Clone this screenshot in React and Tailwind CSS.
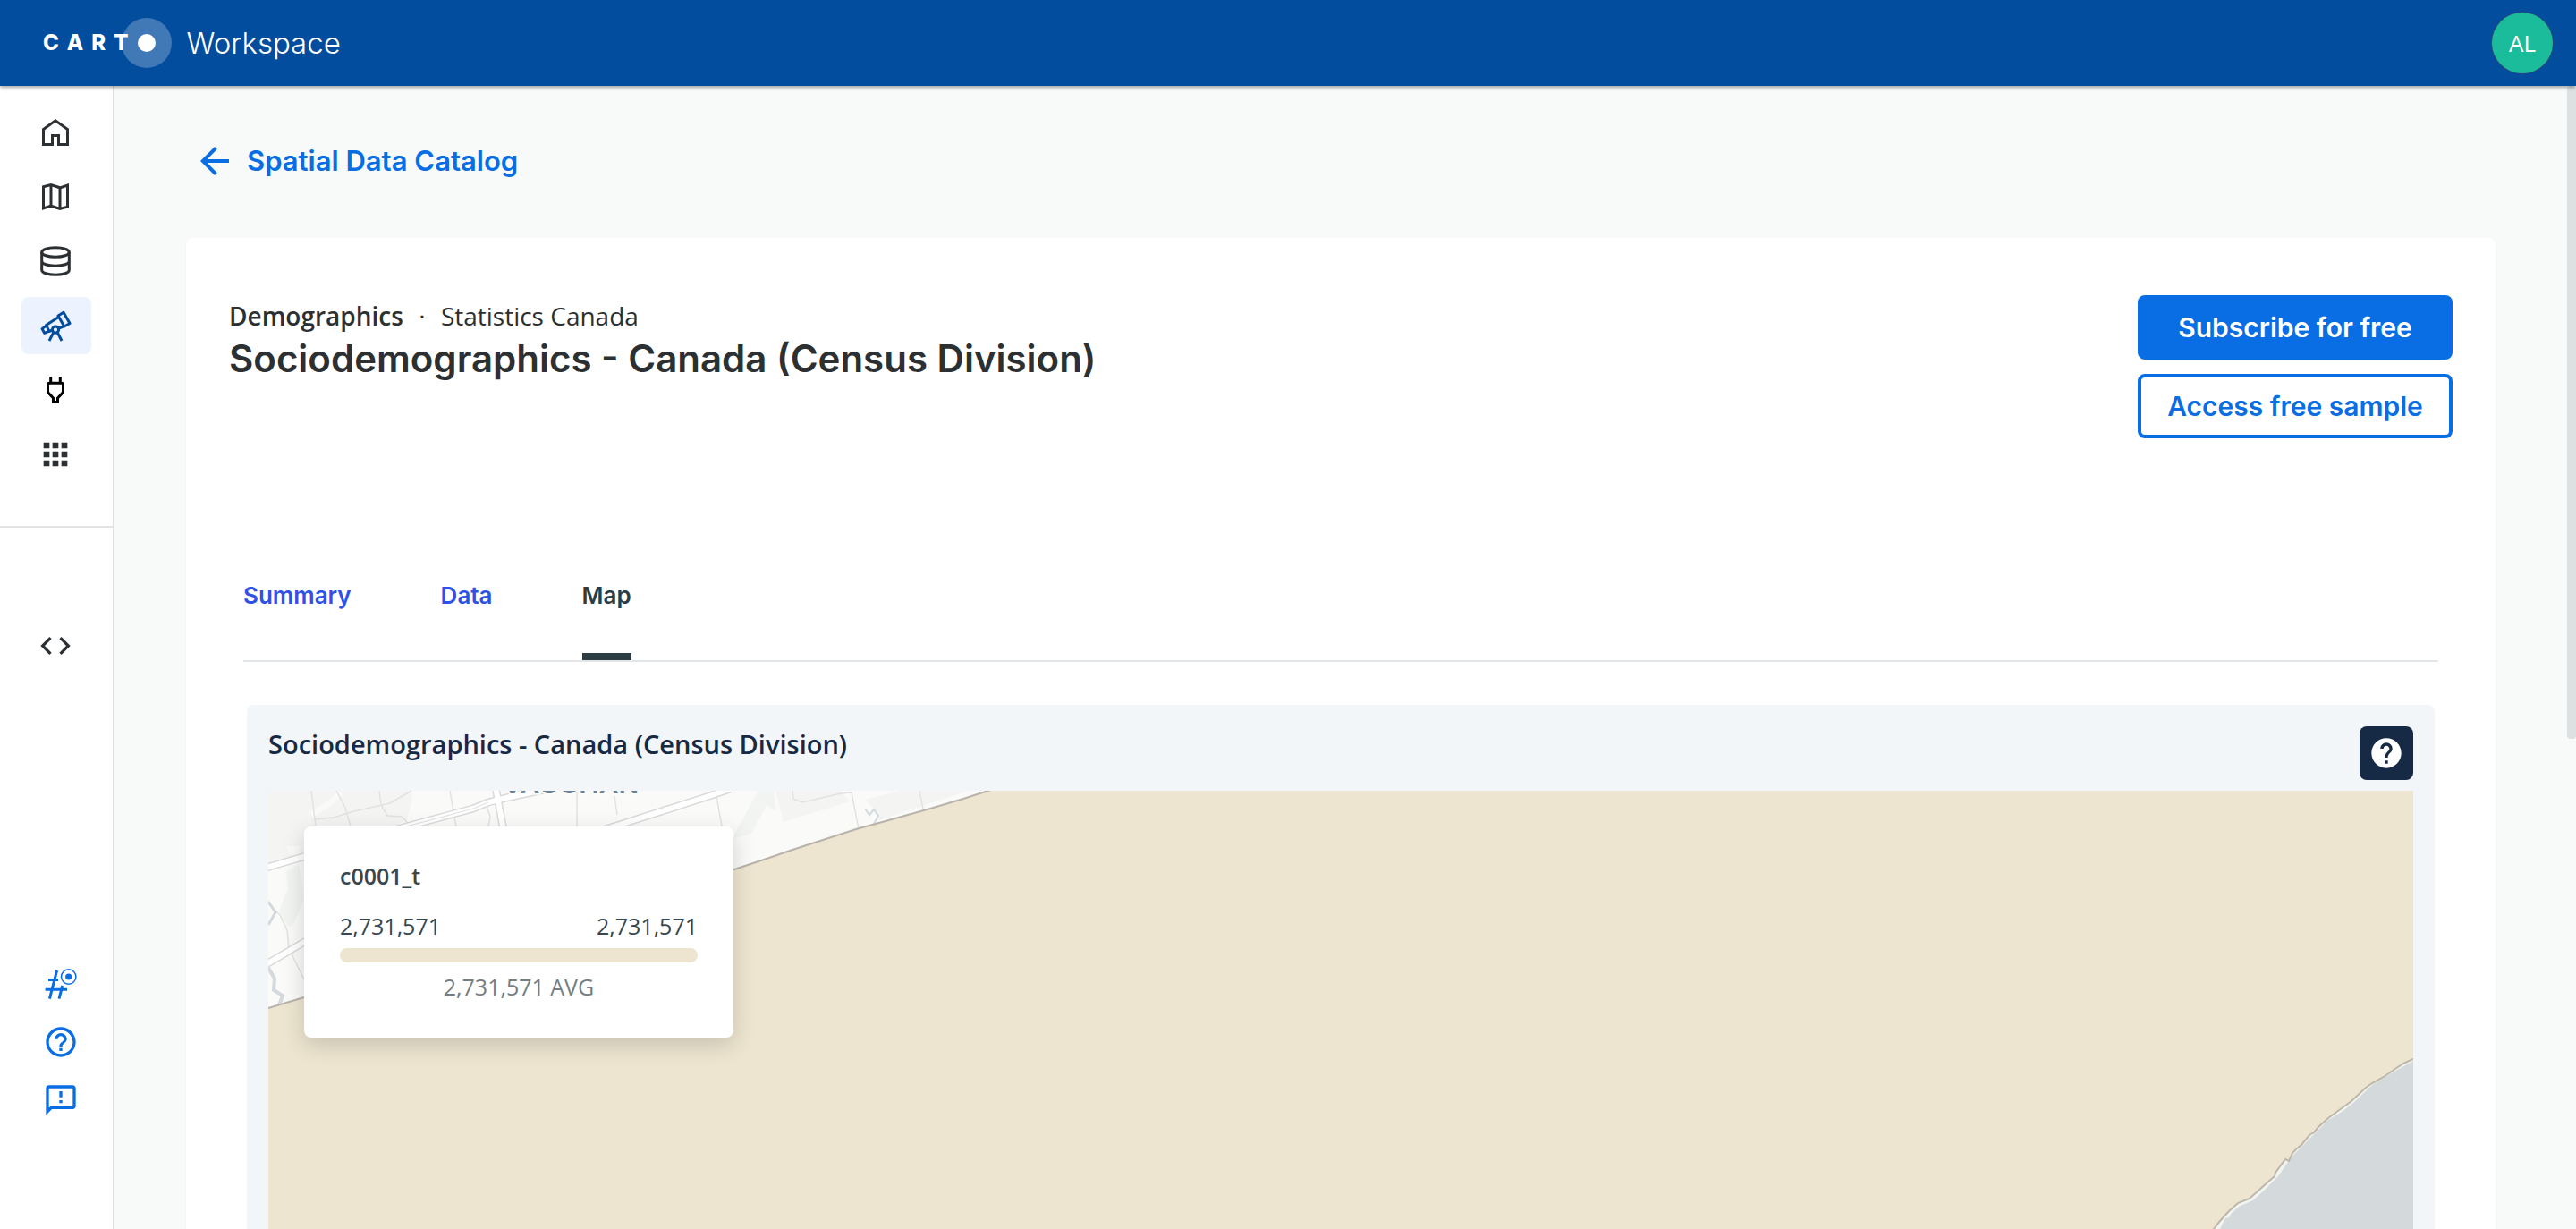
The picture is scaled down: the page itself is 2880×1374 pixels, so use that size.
import React from "react";
import { MdApps, MdArrowBack, MdCode, MdHelp, MdHelpOutline, MdOutlineFeedback } from "react-icons/md";

const outline = { fill: "none", stroke: "currentColor", strokeWidth: 3 };

function HomeIcon() {
  return (
    <svg viewBox="0 0 36 36" className="size-9" {...outline}>
      <path d="M4.5 31.5V14.6L18 4.8L31.5 14.6V31.5H21.5V21.5H14.5V31.5Z" />
    </svg>
  );
}

function MapIcon() {
  return (
    <svg viewBox="0 0 36 36" className="size-9" {...outline}>
      <path d="M4.5 6.8L13 4.6L23 7.8L31.5 5V29.2L23 31.4L13 28.2L4.5 31Z M13 4.6V28.2 M23 7.8V31.4" />
    </svg>
  );
}

function DatabaseIcon() {
  return (
    <svg viewBox="0 0 36 36" className="size-9" {...outline}>
      <ellipse cx="18" cy="8" rx="15.3" ry="5.3" />
      <path d="M2.7 8V28A15.3 5.3 0 0 0 33.3 28V8 M2.7 18A15.3 5.3 0 0 0 33.3 18" />
    </svg>
  );
}

function TelescopeIcon() {
  return (
    <svg viewBox="0 0 36 36" className="size-9" {...outline} strokeLinejoin="round">
      <path d="M21 7L27 3.2L34 15.5L27.8 19Z" />
      <path d="M21.5 8.5L7.5 17.6L11.2 24.4L14.5 23 M21.8 21L28 18.6" />
      <path d="M7.5 18.4L3 21.6L5.8 26.4L11 24.2" />
      <circle cx="18" cy="22.6" r="3.6" />
      <path d="M15.8 25.6L11 35 M20.2 25.6L25 35" />
    </svg>
  );
}

function PlugIcon() {
  return (
    <svg viewBox="0 0 36 36" className="size-9 text-black" {...outline}>
      <path d="M12.7 3V10 M23.3 3V10" />
      <path d="M9.5 12Q9.5 10.2 11.5 10.2H24.5Q26.5 10.2 26.5 12V20.6L20.5 27V31.5H15.5V27L9.5 20.6Z" />
    </svg>
  );
}

function HashIcon() {
  return (
    <svg viewBox="0 0 40 40" className="size-10" {...outline}>
      <path d="M15.6 5L7.4 36.6 M21.8 22L18 36.6 M6 15.4H17 M2.6 26.2H27" />
      <circle cx="28.7" cy="12" r="8.2" strokeWidth="1.5" />
      <circle cx="28.7" cy="12" r="3.6" fill="currentColor" stroke="none" />
    </svg>
  );
}

const COAST =
  "2398,300 2387,305 2375,313 2365,320 2352,327 2345,332 2329,347 2318,355 2303,366 2292,376 2287,382 2282,385 2273,396 2268,400 2263,405 2259,414 2255,412 2244,427 2243,431 2235,438 2225,447 2215,456 2202,461 2192,470 2182,481 2175,490 2090,580 2040,640";
const SHORE =
  "2398,302 2375,315 2352,329 2330,350 2318,359 2303,368 2287,384 2274,397 2264,407 2258,415 2247,431 2233,445 2219,458 2203,465 2195,472 2192,477 2188,478 2182,490 2100,580 2050,640";
const BORDER = "0,243 40,231 521,88 557,76 583,67 657,43 690,34 740,20 777,9 808,-1";

function CensusMap() {
  return (
    <svg viewBox="0 0 2398 640" className="block w-full" role="img" aria-label="Census division map">
      <rect width="2398" height="640" fill="#fafaf8" />
      <g fill="#f4f4f3">
        <path d="M0 0H160L161 10L155 32L140 40L40 62V72L0 85Z" />
        <path d="M567 0H640L650 12L576 35Z" />
        <path d="M667 10L707 0H783L680 34L682 26Z" />
      </g>
      <g fill="#f1f4f1">
        <path d="M548 0H565L567 23L557 16L540 48L521 53V49Z" />
        <path d="M20 90L34 82L40 120L28 150L22 152L12 134L22 110Z" />
      </g>
      <path d="M20 62H36L34 73L24 72Z M46 24L66 12L78 0L84 4L68 18L50 30Z" fill="#fafaf8" />
      <g fill="none" stroke="#e2e2e1" strokeWidth="1.5">
        <path d="M48 0L53 40 M76 0L86 19L92 40 M51 32L73 30L96 23L136 14L153 4L160 0" />
        <path d="M124 0L126 16L133 28L149 29L156 36 M203 0L210 40 M345 0V40 M387 6L390 27 M244 16L248 29L246 40" />
        <path d="M500 0L507 40 M586 0L587 9L597 13L640 3L652 2L660 43 M728 0L732 21" />
        <path d="M0 126L13 139L21 156L23 176L40 211" />
      </g>
      <g fill="none" stroke="#d9d9d9" strokeWidth="9">
        <path d="M254 -4L263 44" />
        <path d="M140 44L203 27L229 20L246 13L266 8L308 -1" />
        <path d="M374 44L496 5L516 -2" />
        <path d="M-2 86L42 73" />
        <path d="M-2 194L42 168" />
      </g>
      <g fill="none" stroke="#ffffff" strokeWidth="6">
        <path d="M254 -4L263 44" />
        <path d="M140 44L203 27L229 20L246 13L266 8L308 -1" />
        <path d="M374 44L496 5L516 -2" />
        <path d="M-2 86L42 73" />
        <path d="M-2 194L42 168" />
      </g>
      <path d="M154 40L203 27L229 20L246 13" fill="none" stroke="#e0e0e0" strokeWidth="1" />
      <path d="M0 124L8 136L0 150" fill="none" stroke="#d3d9dc" strokeWidth="3" />
      <path d="M0 198L7 210L6 223L16 229L12 240" fill="none" stroke="#d3d9dc" strokeWidth="4" />
      <path d="M667 20L672 27L677 21L682 28L677 37" fill="none" stroke="#d3d9dc" strokeWidth="2" />
      <text
        x="262"
        y="3"
        fontSize="30"
        fontWeight="600"
        fill="#6b8196"
        stroke="#ffffff"
        strokeWidth="3"
        paintOrder="stroke"
        className="font-['Inter',sans-serif]"
      >
        VAUGHAN
      </text>
      <polygon points={`${BORDER} 2398,-1 2398,640 0,640`} fill="#ede5cf" />
      <polyline points={BORDER} fill="none" stroke="#b9b2ac" strokeWidth="2" />
      <polygon points={`${COAST} 2398,640`} fill="#f2f4f1" />
      <polygon points={`${SHORE} 2398,640`} fill="#d4dadc" />
      <polyline points={COAST} fill="none" stroke="#bdb7aa" strokeWidth="2" />
    </svg>
  );
}

const NAV = [
  { label: "Home", icon: <HomeIcon /> },
  { label: "Maps", icon: <MapIcon /> },
  { label: "Data Explorer", icon: <DatabaseIcon /> },
  { label: "Data Observatory", icon: <TelescopeIcon />, active: true },
  { label: "Connections", icon: <PlugIcon /> },
  { label: "Applications", icon: <MdApps className="size-10" /> },
];

const SUPPORT = [
  { label: "What's new", icon: <HashIcon /> },
  { label: "Help", icon: <MdHelpOutline className="size-10" /> },
  { label: "Feedback", icon: <MdOutlineFeedback className="size-10" /> },
];

function Header() {
  return (
    <header className="relative z-10 flex h-24 shrink-0 items-center justify-between bg-[#024d9e] pr-[26px] pl-12 font-['Inter',sans-serif] text-white shadow-[0_2px_4px_rgba(0,0,0,0.35)]">
      <div className="flex items-center">
        <a href="#home" aria-label="CARTO" className="flex items-center gap-[9px] text-2xl font-extrabold">
          <span>C</span>
          <span>A</span>
          <span>R</span>
          <span>T</span>
          <span className="-ml-4 flex size-14 items-center justify-center rounded-full bg-white/25">
            <span className="size-5 rounded-full bg-white" />
          </span>
        </a>
        <span className="ml-4 text-[33px] leading-10 font-light">Workspace</span>
      </div>
      <button
        type="button"
        className="flex size-[68px] items-center justify-center rounded-full bg-[#1bbc9b] font-['Open_Sans',sans-serif] text-[26px] ring-1 ring-[#2c4a78]"
      >
        AL
      </button>
    </header>
  );
}

function Sidebar() {
  return (
    <aside className="flex w-32 shrink-0 flex-col border-r-2 border-[#e0e0e0] bg-white text-[#2c3032]">
      <nav className="flex flex-col items-center gap-2 border-b-2 border-[#e4e4e4] pt-5 pb-12">
        {NAV.map((item) => (
          <a
            key={item.label}
            href="#nav"
            aria-label={item.label}
            className={
              item.active
                ? "flex h-16 w-[78px] items-center justify-center rounded-lg bg-[#ecf3fe] pr-0.5 text-[#024d9e]"
                : "flex h-16 w-[78px] items-center justify-center rounded-lg pr-0.5"
            }
          >
            {item.icon}
          </a>
        ))}
      </nav>
      <a href="#developers" aria-label="Developers" className="mt-[100px] flex h-16 items-center justify-center pr-0.5">
        <MdCode className="size-10" />
      </a>
      <nav className="mt-auto flex flex-col items-center gap-[25px] pb-[124px] pl-2.5 text-[#096de3]">
        {SUPPORT.map((item) => (
          <a key={item.label} href="#support" aria-label={item.label}>
            {item.icon}
          </a>
        ))}
      </nav>
    </aside>
  );
}

function RangeWidget() {
  return (
    <section className="absolute top-10 left-10 w-[480px] rounded-lg bg-white px-10 pt-[39px] pb-[41px] text-[25px] leading-8 text-[#36474f] shadow-[0_8px_24px_rgba(44,48,50,0.2)]">
      <h3 className="font-semibold">c0001_t</h3>
      <div className="mt-6 flex justify-between">
        <span>2,731,571</span>
        <span>2,731,571</span>
      </div>
      <div className="mt-[9px] h-4 rounded-lg bg-[#ede5cf]" />
      <p className="mt-[11px] text-center text-[#747d82]">2,731,571 AVG</p>
    </section>
  );
}

function Tabs() {
  return (
    <div role="tablist" className="mx-4 mt-40 flex gap-[100px] border-b-2 border-[#e2e6e9] font-['Inter',sans-serif] text-[26px] leading-8 font-semibold text-[#2e51e6]">
      <button type="button" role="tab" aria-selected="false" className="pb-14">
        Summary
      </button>
      <button type="button" role="tab" aria-selected="false" className="pb-14">
        Data
      </button>
      <button type="button" role="tab" aria-selected="true" className="border-b-8 border-[#2c3c43] pb-12 text-[#2c3c43]">
        Map
      </button>
    </div>
  );
}

export default function App() {
  return (
    <div className="flex h-screen flex-col overflow-hidden bg-[#f8faf9] font-['Open_Sans',sans-serif] text-[#2c3032]">
      <Header />
      <div className="flex min-h-0 flex-1">
        <Sidebar />
        <main className="min-w-0 flex-1 overflow-hidden px-20">
          <a
            href="#catalog"
            className="mt-[60px] ml-2 flex h-12 w-fit items-center gap-3 font-['Inter',sans-serif] text-[31px] font-semibold text-[#096de3]"
          >
            <MdArrowBack className="size-12" />
            Spatial Data Catalog
          </a>
          <article className="mt-[62px] rounded-lg bg-white px-12 pt-16 pb-16 shadow-[0_2px_2px_rgba(44,48,50,0.08)]">
            <div className="flex justify-between">
              <div className="pt-[3px]">
                <p className="flex text-[28px] leading-10">
                  <span className="font-semibold">Demographics</span>
                  <span className="w-[42px] text-center">·</span>
                  <span>Statistics Canada</span>
                </p>
                <h1 className="mt-1 font-['Inter',sans-serif] text-[42px] leading-[48px] font-semibold">
                  Sociodemographics - Canada (Census Division)
                </h1>
              </div>
              <div className="flex w-[352px] flex-col gap-4 font-['Inter',sans-serif] text-[30px] leading-10 font-semibold">
                <button type="button" className="h-[72px] rounded-lg bg-[#096de3] text-white">
                  Subscribe for free
                </button>
                <button type="button" className="h-[72px] rounded-lg border-4 border-[#096de3] bg-white text-[#096de3]">
                  Access free sample
                </button>
              </div>
            </div>
            <Tabs />
            <section className="mx-5 mt-12 rounded-lg bg-[#f2f6f9] p-6">
              <div className="flex items-start justify-between">
                <h2 className="text-[29px] leading-10 font-semibold text-[#162945]">
                  Sociodemographics - Canada (Census Division)
                </h2>
                <button
                  type="button"
                  aria-label="Help"
                  className="flex size-[60px] items-center justify-center rounded-lg bg-[#162945] text-white"
                >
                  <MdHelp className="size-10" />
                </button>
              </div>
              <div className="relative mt-3">
                <CensusMap />
                <RangeWidget />
              </div>
            </section>
          </article>
        </main>
        <div aria-hidden="true" className="w-2.5 shrink-0">
          <div className="h-4/7 rounded bg-[#dde1e2]" />
        </div>
      </div>
    </div>
  );
}
